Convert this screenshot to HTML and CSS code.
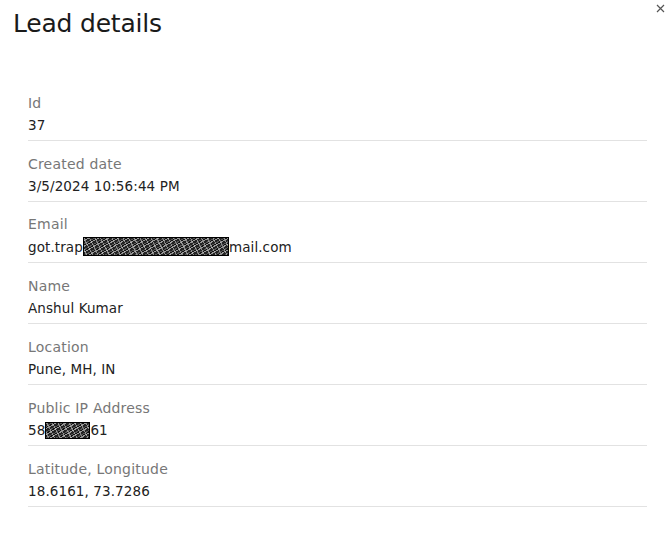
FILE: index.html
```html
<!DOCTYPE html>
<html>
<head>
<meta charset="utf-8">
<link rel="stylesheet" href="styles.css">
</head>
<body>
<div class="dialog">
  <button class="close" aria-label="Close">
    <svg width="9" height="9" viewBox="0 0 9 9"><path d="M1 1L8 8M8 1L1 8" stroke="#555" stroke-width="1.2"/></svg>
  </button>
  <h1 class="title">Lead details</h1>
  <div class="list">
    <div class="row"><div class="label">Id</div><div class="value">37</div></div>
    <div class="row"><div class="label">Created date</div><div class="value">3/5/2024 10:56:44 PM</div></div>
    <div class="row"><div class="label">Email</div><div class="value">got.trap<span class="redact redact-email"></span>mail.com</div></div>
    <div class="row"><div class="label">Name</div><div class="value">Anshul Kumar</div></div>
    <div class="row"><div class="label">Location</div><div class="value">Pune, MH, IN</div></div>
    <div class="row"><div class="label">Public IP Address</div><div class="value">58<span class="redact redact-ip"></span>61</div></div>
    <div class="row"><div class="label">Latitude, Longitude</div><div class="value">18.6161, 73.7286</div></div>
  </div>
</div>
</body>
</html>
```
FILE: styles.css
```css
html, body { margin: 0; padding: 0; background: #fff; }
body { font-family: "DejaVu Sans", sans-serif; color: #222; }
.dialog { position: relative; width: 671px; height: 533px; box-sizing: border-box; padding: 9px 24px 0 13px; }
.close { position: absolute; top: 2px; right: 5px; border: 0; background: none; padding: 0; width: 12px; height: 12px; display: flex; align-items: center; justify-content: center; }
.title { margin: 0; font-size: 25px; font-weight: 500; line-height: 30px; color: #1a1a1a; letter-spacing: -0.2px; }
.list { padding: 35px 0 0 15px; }
.row { border-bottom: 1px solid #e2e2e2; height: 60px; box-sizing: content-box; display: flex; flex-direction: column; justify-content: flex-end; padding-bottom: 6px; margin-top: -6px; }
.row:first-child { margin-top: 0; }
.label { font-size: 14px; line-height: 18px; color: #777; margin-bottom: 4px; letter-spacing: 0.2px; }
.value { font-size: 13.5px; line-height: 18px; color: #222; display: flex; align-items: center; letter-spacing: 0.1px; }
.redact { display: inline-block; background:
  repeating-linear-gradient(63deg, transparent 0 2px, rgba(200,200,200,0.6) 2px 3px, transparent 3px 5px),
  repeating-linear-gradient(-30deg, #111 0 1px, #555 1px 2px, #222 2px 4px, #999 4px 5px);
  border: 1px solid #000; box-sizing: border-box; }
.redact-email { width: 146px; height: 19px; }
.redact-ip { width: 45px; height: 17px; }
```
